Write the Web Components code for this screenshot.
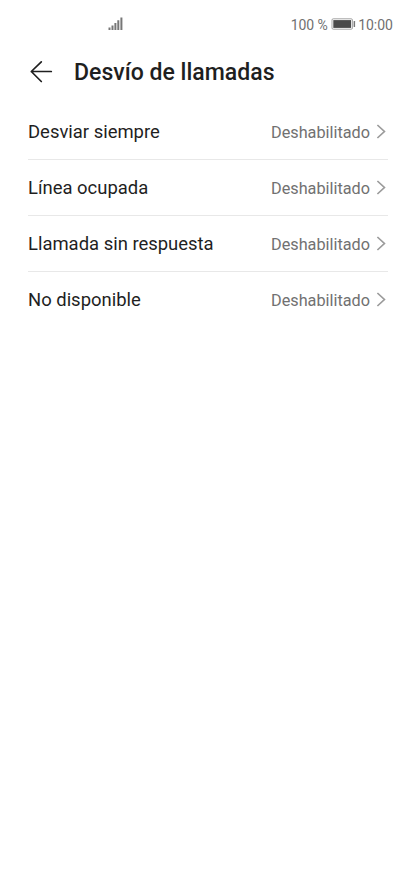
<!DOCTYPE html>
<html lang="es">

<head>
    <meta charset="UTF-8">
    <meta name="viewport" content="width=device-width, initial-scale=1.0">
    <title>Desvío de llamadas</title>
    <style>
        :root {
            --text-color: #1f1f1f;
            --muted-color: #717171;
            --line-color: #e8e8e8;
        }

        body {
            margin: 0;
            background: #fff;
            color: var(--text-color);
            font-family: Roboto, "Liberation Sans", sans-serif;
        }
    </style>
</head>

<body>
    <phone-screen>
        <status-bar slot="status" battery="100 %">10:00</status-bar>
        <title-bar slot="title">Desvío de llamadas</title-bar>
        <setting-row>Desviar siempre<span slot="value">Deshabilitado</span></setting-row>
        <setting-row>Línea ocupada<span slot="value">Deshabilitado</span></setting-row>
        <setting-row>Llamada sin respuesta<span slot="value">Deshabilitado</span></setting-row>
        <setting-row>No disponible<span slot="value">Deshabilitado</span></setting-row>
    </phone-screen>

    <script>
        customElements.define('phone-screen', class extends HTMLElement {
            constructor() {
                super();
                const shadowRoot = this.attachShadow({mode: 'open'});
                shadowRoot.innerHTML = `
                    <style>
                        :host {
                            display: block;
                            min-height: 889px;
                            background: #fff;
                        }
                        main {
                            padding: 0 28px;
                        }
                    </style>
                    <slot name="status"></slot>
                    <slot name="title"></slot>
                    <main><slot></slot></main>
                `;
            }
        });

        customElements.define('status-bar', class extends HTMLElement {
            constructor() {
                super();
                const shadowRoot = this.attachShadow({mode: 'open'});
                shadowRoot.innerHTML = `
                    <style>
                        :host {
                            display: flex;
                            align-items: center;
                            justify-content: space-between;
                            box-sizing: border-box;
                            height: 48px;
                            padding: 0 23px 0 108px;
                            color: var(--muted-color);
                            font-size: 14px;
                        }
                        .right {
                            display: flex;
                            align-items: center;
                        }
                        .right span {
                            padding-top: 1px;
                        }
                        .level {
                            letter-spacing: -.1px;
                        }
                        .battery {
                            margin: 0 2.5px 0 3px;
                        }
                        svg {
                            display: block;
                        }
                    </style>
                    <!-- mobile signal, five bars -->
                    <svg width="16" height="14" viewBox="0 0 16 14" fill="#777">
                        <path d="M.5 10.6h2V13h-2zM3.5 8.6h2V13h-2zM6.4 6h2v7h-2zM9.3 3.3h2V13h-2zM12.4.5h2V13h-2z"/>
                    </svg>
                    <div class="right">
                        <span class="level"></span>
                        <svg class="battery" width="25" height="12" viewBox="0 0 25 12">
                            <rect x="1" y=".8" width="20.4" height="10.4" rx="1.2" fill="#fff" stroke="#999" stroke-width=".9"/>
                            <rect x="2.3" y="2.1" width="17.8" height="7.8" fill="#494949"/>
                            <rect x="22.6" y="3" width="1.5" height="6" rx=".5" fill="#777"/>
                        </svg>
                        <span><slot></slot></span>
                    </div>
                `;
                shadowRoot.querySelector('.level').textContent = this.getAttribute('battery');
            }
        });

        customElements.define('title-bar', class extends HTMLElement {
            constructor() {
                super();
                const shadowRoot = this.attachShadow({mode: 'open'});
                shadowRoot.innerHTML = `
                    <style>
                        :host {
                            display: flex;
                            align-items: center;
                            height: 48px;
                            padding: 0 28px;
                            margin-bottom: 8px;
                        }
                        svg {
                            display: block;
                            margin-right: 20px;
                        }
                        h1 {
                            margin: 0;
                            padding-top: 2px;
                            font-size: 23.05px;
                            font-weight: 500;
                            line-height: 28px;
                        }
                    </style>
                    <svg width="26" height="26" viewBox="0 0 26 26" fill="none" stroke="currentColor" stroke-width="1.7" stroke-linecap="round" stroke-linejoin="round">
                        <path d="M13.3 2.8L3.3 12.5l10 10M3.3 12.5h20"/>
                    </svg>
                    <h1><slot></slot></h1>
                `;
            }
        });

        customElements.define('setting-row', class extends HTMLElement {
            constructor() {
                super();
                const shadowRoot = this.attachShadow({mode: 'open'});
                shadowRoot.innerHTML = `
                    <style>
                        :host {
                            display: flex;
                            align-items: center;
                            box-sizing: border-box;
                            height: 56px;
                            border-bottom: 1px solid var(--line-color);
                        }
                        :host(:last-of-type) {
                            border-bottom-color: transparent;
                        }
                        .label {
                            flex: 1;
                            padding-top: 1px;
                            font-size: 18.45px;
                        }
                        .value {
                            padding-top: 1px;
                            color: var(--muted-color);
                            font-size: 16.25px;
                        }
                        svg {
                            display: block;
                            margin: 0 2px 0 6px;
                        }
                    </style>
                    <span class="label"><slot></slot></span>
                    <span class="value"><slot name="value"></slot></span>
                    <svg width="10" height="16" viewBox="0 0 10 16" fill="none" stroke="#9b9b9b" stroke-width="1.7">
                        <path d="M1.4 1L8.4 7.5 1.4 14"/>
                    </svg>
                `;
            }
        });
    </script>
</body>

</html>
